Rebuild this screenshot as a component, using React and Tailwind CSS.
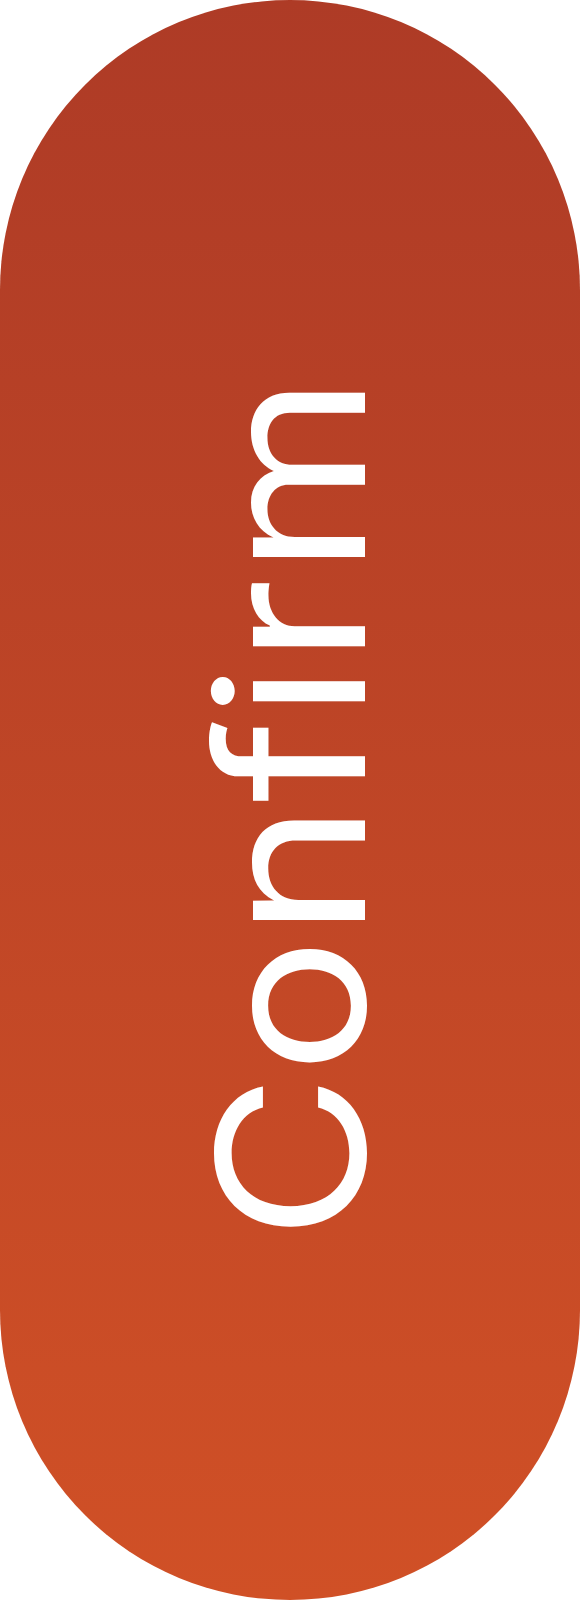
import React from "react";

const App = () => {
  return (
    <div className="w-[580px] h-[1600px] bg-white overflow-hidden">
      <button
        type="button"
        className="block w-[580px] h-[1600px] rounded-full bg-linear-to-b from-[#ae3b26] to-[#d05026]"
      >
        <div className="flex h-full w-full items-center justify-center pt-[16px]">
          <span
            className="[writing-mode:vertical-rl] rotate-180 scale-y-[1.11] text-white text-[205px] leading-none font-normal"
            style={{ fontFamily: "Inter, 'Noto Sans', sans-serif" }}
          >
            Confirm
          </span>
        </div>
      </button>
    </div>
  );
};

export default App;
